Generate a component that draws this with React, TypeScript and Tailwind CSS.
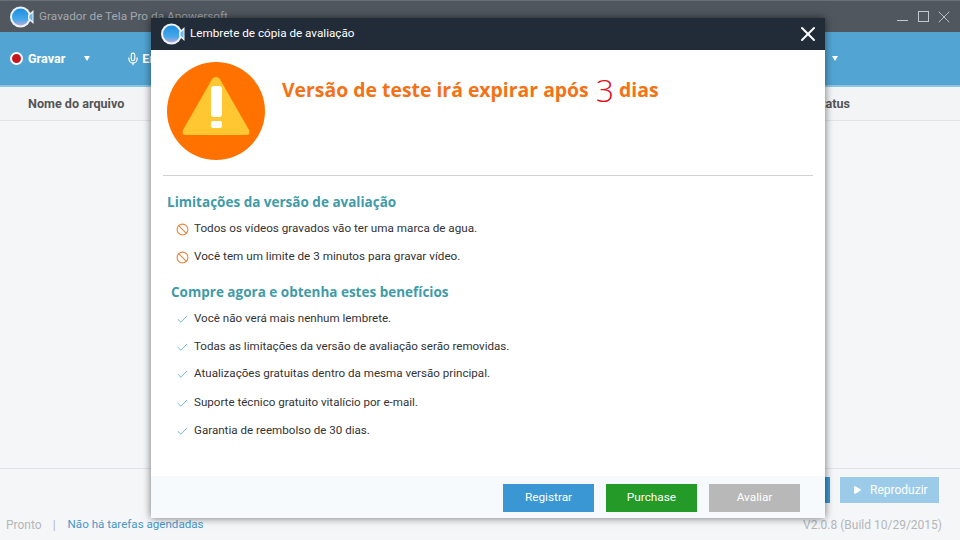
import { Check, Ban, X, Mic, Play } from "lucide-react";

const font = "font-['Roboto','Open_Sans',sans-serif]";
const heading = "font-['Open_Sans',sans-serif] font-bold";

const AppLogo = ({ id }: { id: string }) => (
    <svg width="24" height="22" viewBox="0 0 24 22">
        <defs>
            <linearGradient id={id} x1="0" y1="0" x2="0" y2="1">
                <stop offset="0" stopColor="#1f8fe0" />
                <stop offset="0.65" stopColor="#45a8ea" />
                <stop offset="1" stopColor="#b9a8dc" />
            </linearGradient>
        </defs>
        <circle cx="10.5" cy="11" r="10.5" fill="#eef2f6" />
        <circle cx="10.5" cy="11" r="8.5" fill={`url(#${id})`} />
        <path d="M18 9 L23.5 4 V18 L18 13Z" fill="#eef2f6" />
        <path d="M19.5 9.5 L22.5 7 V15 L19.5 12.5Z" fill="#6db8ea" />
    </svg>
);

const WarningIcon = () => (
    <svg width="98" height="98" viewBox="0 0 98 98">
        <circle cx="49" cy="49" r="49" fill="#ff7200" />
        <path d="M49 15 Q52 15 54 19 L82 68 Q84 73 79 73 H19 Q14 73 16 68 L44 19 Q46 15 49 15Z" fill="#ffc832" />
        <rect x="44" y="24" width="11" height="31" rx="3" fill="#fff" />
        <rect x="44" y="59" width="11" height="7" rx="2" fill="#fff" />
    </svg>
);

const Limit = ({ text, className }: { text: string, className: string }) => (
    <div className={`flex items-center pl-[25px] h-[20px] ${className}`}>
        <Ban size={13} color="#e8833a" strokeWidth={2} className="mt-[1px]" />
        <span className="ml-[5px] text-[11.7px] text-[#333]">{text}</span>
    </div>
);

const Benefit = ({ text, className }: { text: string, className: string }) => (
    <div className={`flex items-center pl-[25px] h-[20px] ${className}`}>
        <Check size={13} color="#4a9fc8" strokeWidth={1.4} className="mt-[1px]" />
        <span className="ml-[5px] text-[11.6px] text-[#333]">{text}</span>
    </div>
);

export default function App() {
    return (
        <div className={`relative w-[960px] h-[540px] overflow-hidden flex flex-col bg-[#f4f6f8] ${font}`}>
            <div className="h-[32px] shrink-0 flex items-center bg-[#50575f] border-t border-[#6a7077] pl-[10px] pr-[6px]">
                <AppLogo id="logo-main" />
                <span className="ml-[5px] text-[11.8px] text-[#a3a8ad]">Gravador de Tela Pro da Apowersoft</span>
                <div className="ml-auto flex items-center text-[#c5c8cb]">
                    <div className="w-[11px] h-[11px] border-b border-[#c5c8cb] -mt-[2px]" />
                    <div className="ml-[10px] w-[11px] h-[11px] border border-[#c5c8cb]" />
                    <X size={20} strokeWidth={1.1} className="ml-[5px]" />
                </div>
            </div>
            <div className="h-[55px] shrink-0 flex items-center bg-[#52a5d3] border-b-2 border-[#8cc4e2] pl-[10px] text-white font-bold text-[12.6px]">
                <span className="w-[13px] h-[13px] rounded-full bg-[#c8161d] border-2 border-white" />
                <span className="ml-[5px] mt-[2px]">Gravar</span>
                <span className="ml-[19px] w-0 h-0 border-x-[3px] border-x-transparent border-t-[5px] border-t-white" />
                <Mic size={14} className="ml-[36px]" />
                <span className="ml-[2px] mt-[2px]">Em</span>
                <span className="ml-[672px] w-0 h-0 border-x-[3px] border-x-transparent border-t-[5px] border-t-white" />
            </div>
            <div className="h-[34px] shrink-0 flex items-center justify-between bg-[#f3f4f6] border-b border-[#e2e4e6] pt-[2px] pl-[28px] pr-[110px] text-[12.6px] font-bold text-[#555]">
                <span>Nome do arquivo</span>
                <span>Status</span>
            </div>
            <div className="flex-1" />
            <div className="h-[72px] shrink-0 flex flex-col border-t border-[#dfe5ea]">
                <div className="flex justify-end gap-[10px] pt-[8px] pr-[21px]">
                    <div className="w-[90px] h-[26px] bg-[#3a97d4]" />
                    <div className="w-[99px] h-[26px] flex items-center pl-[12px] bg-[#9ccbea] text-[12px] text-white">
                        <Play size={10} fill="#fff" strokeWidth={0} />
                        <span className="ml-[8px]">Reproduzir</span>
                    </div>
                </div>
                <div className="flex items-center justify-between mt-[13px] pl-[6px] pr-[18px] text-[12px]">
                    <div className="flex items-center">
                        <span className="text-[#b4b6b8]">Pronto</span>
                        <span className="ml-[11px] text-[#b4b6b8]">|</span>
                        <span className="ml-[12px] text-[11.6px] text-[#4a96c8]">Não há tarefas agendadas</span>
                    </div>
                    <span className="text-[#b4b6b8]">V2.0.8 (Build 10/29/2015)</span>
                </div>
            </div>

            <div className="absolute left-[151px] top-[18px] w-[674px] h-[500px] flex flex-col bg-white shadow-[0_0_8px_rgba(0,0,0,0.55)]">
                <div className="h-[32px] shrink-0 flex items-center bg-[#222c39] pl-[10px] pr-[5px] text-white">
                    <AppLogo id="logo-modal" />
                    <span className="ml-[5px] text-[11.7px]">Lembrete de cópia de avaliação</span>
                    <X size={24} strokeWidth={2} className="ml-auto" />
                </div>
                <div className="h-[125px] shrink-0 flex items-start pl-[16px] pt-[12px]">
                    <WarningIcon />
                    <div className={`flex items-center h-[32px] ml-[17px] mt-[12px] text-[#f47216] text-[19.4px] ${heading}`}>
                        <span>Versão de teste irá expirar após</span>
                        <span className="ml-[7px] mr-[5px] text-[32px] font-light text-[#e2101c]">3</span>
                        <span>dias</span>
                    </div>
                </div>
                <div className="h-px shrink-0 mx-[12px] bg-[#cfd3d6]" />
                <div className="flex-1 min-h-0">
                    <div className={`pl-[16px] pt-[17px] text-[13.5px] text-[#3f9ba8] leading-[18px] ${heading}`}>Limitações da versão de avaliação</div>
                    <Limit text="Todos os vídeos gravados vão ter uma marca de agua." className="mt-[8px]" />
                    <Limit text="Você tem um limite de 3 minutos para gravar vídeo." className="mt-[8px]" />
                    <div className={`pl-[20px] pt-[16px] text-[13.5px] text-[#3f9ba8] leading-[18px] ${heading}`}>Compre agora e obtenha estes benefícios</div>
                    <Benefit text="Você não verá mais nenhum lembrete." className="mt-[8px]" />
                    <Benefit text="Todas as limitações da versão de avaliação serão removidas." className="mt-[8px]" />
                    <Benefit text="Atualizações gratuitas dentro da mesma versão principal." className="mt-[7px]" />
                    <Benefit text="Suporte técnico gratuito vitalício por e-mail." className="mt-[9px]" />
                    <Benefit text="Garantia de reembolso de 30 dias." className="mt-[8px]" />
                </div>
                <div className="h-[42px] shrink-0 flex items-start justify-end gap-[12px] pr-[25px] pt-[8px] bg-[#f7fafd] text-[11.8px] text-white">
                    <button className="w-[91px] h-[28px] bg-[#3a97d4]">Registrar</button>
                    <button className="w-[91px] h-[28px] bg-[#249a28]">Purchase</button>
                    <button className="w-[91px] h-[28px] bg-[#b8b8b8]">Avaliar</button>
                </div>
            </div>
        </div>
    )
}
